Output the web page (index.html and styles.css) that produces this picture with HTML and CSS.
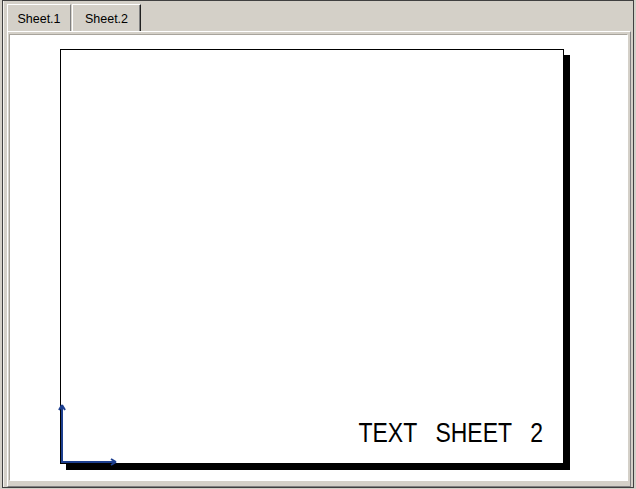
FILE: index.html
```html
<!DOCTYPE html>
<html>
<head>
<meta charset="utf-8">
<link rel="stylesheet" href="styles.css">
</head>
<body>
<div class="window">
  <div class="tabs">
    <div class="tab tab-1">Sheet.1</div>
    <div class="tab tab-2 active">Sheet.2</div>
  </div>
  <div class="panel">
    <div class="canvas">
      <div class="paper">
        <svg class="axis" width="60" height="60" viewBox="0 0 60 60">
          <path d="M1 60 V3 M1 2 L-2 7 M1 2 L4 7" stroke="#1d3f8f" stroke-width="2" fill="none"/>
          <path d="M0 59 H54 M55 59 L50 56 M55 59 L50 62" stroke="#1d3f8f" stroke-width="2" fill="none"/>
        </svg>
        <span class="label">TEXT SHEET 2</span>
      </div>
    </div>
  </div>
</div>
</body>
</html>
```

FILE: styles.css
```css
html, body {
  margin: 0;
  padding: 0;
  background: #d4d0c8;
}

.window {
  box-sizing: border-box;
  margin-left: 2px;
  width: 632px;
  height: 488px;
  border: 1px solid #404040;
  background: #d4d0c8;
  display: flex;
  flex-direction: column;
  box-shadow: inset 1px 0 0 #f4f2ee;
}

.tabs {
  height: 30px;
  box-sizing: border-box;
  padding: 3px 0 0 4px;
  display: flex;
  align-items: flex-start;
}

.tab {
  box-sizing: border-box;
  height: 27px;
  padding-top: 2px;
  line-height: 24px;
  text-align: center;
  font-family: "Liberation Sans", Arial, sans-serif;
  font-size: 12.5px;
  color: #000;
  border-top: 1px solid #ffffff;
  border-left: 1px solid #ffffff;
  border-right: 1px solid #808080;
  background: #d4d0c8;
}

.tab-1 {
  width: 64px;
}

.tab-2 {
  width: 69px;
  margin-left: 1px;
  border-right: 1px solid #202020;
  box-shadow: inset -1px 0 0 #808080;
}

.panel {
  flex: 1;
  box-sizing: border-box;
  margin: 0 2px 0 4px;
  padding: 2px 2px 5px 1px;
  border-top: 1px solid #ffffff;
  border-left: 1px solid #ffffff;
  border-right: 1px solid #808080;
  border-bottom: 1px solid #808080;
  display: flex;
}

.canvas {
  flex: 1;
  box-sizing: border-box;
  background: #ffffff;
  border-top: 1px solid #a8a49c;
  border-left: 1px solid #a8a49c;
  border-right: 1px solid #ffffff;
  border-bottom: 1px solid #ffffff;
  padding: 14px 0 0 50px;
}

.paper {
  position: relative;
  box-sizing: border-box;
  width: 504px;
  height: 415px;
  border: 1px solid #000;
  background: #fff;
  box-shadow: 6px 6px 0 0 #000;
  display: flex;
  align-items: flex-end;
  justify-content: flex-end;
  padding: 0 20px 16px 0;
}

.axis {
  position: absolute;
  left: 0;
  bottom: 0;
  overflow: visible;
}

.label {
  display: inline-block;
  font-family: "Liberation Sans", Arial, sans-serif;
  font-size: 28px;
  line-height: 28px;
  color: #000;
  white-space: pre;
  word-spacing: 15px;
  transform: scaleX(0.82);
  transform-origin: right center;
}
```
